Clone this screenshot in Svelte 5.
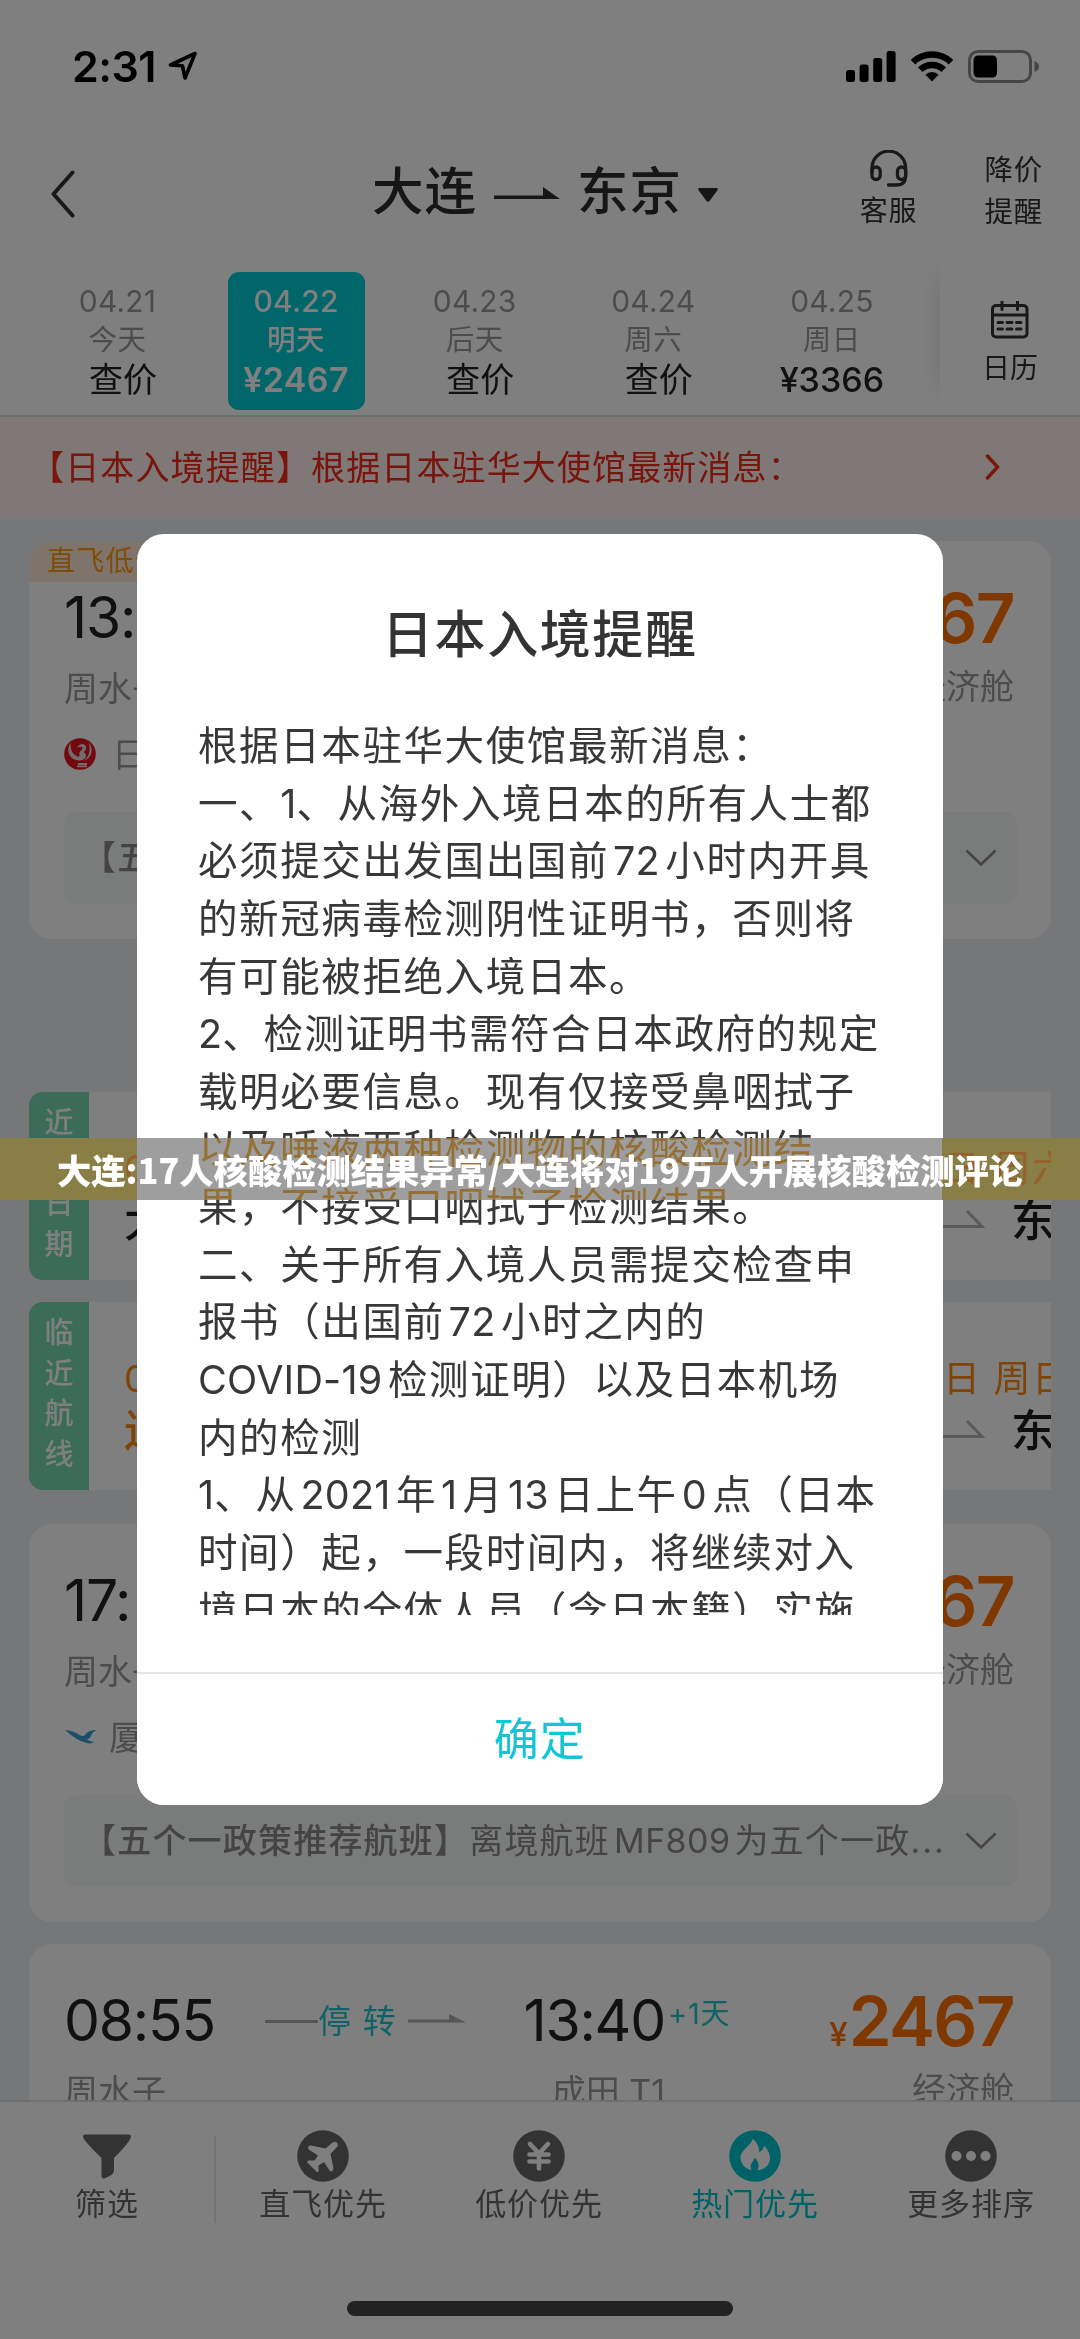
<script>
  const days = [
    { date: '04.21', name: '今天', price: '查价', query: true },
    { date: '04.22', name: '明天', price: '¥2467', active: true },
    { date: '04.23', name: '后天', price: '查价', query: true },
    { date: '04.24', name: '周六', price: '查价', query: true },
    { date: '04.25', name: '周日', price: '¥3366' }
  ];

  const noticeLines = [
    '根据日本驻华大使馆最新消息：',
    '一、1、从海外入境日本的所有人士都',
    '必须提交出发国出国前72小时内开具',
    '的新冠病毒检测阴性证明书，否则将',
    '有可能被拒绝入境日本。',
    '2、检测证明书需符合日本政府的规定',
    '载明必要信息。现有仅接受鼻咽拭子',
    '以及唾液两种检测物的核酸检测结',
    '果，不接受口咽拭子检测结果。',
    '二、关于所有入境人员需提交检查申',
    '报书（出国前72小时之内的',
    'COVID-19检测证明）以及日本机场',
    '内的检测',
    '1、从2021年1月13日上午0点（日本',
    '时间）起，一段时间内，将继续对入',
    '境日本的全体人员（含日本籍）实施'
  ];

  // Splits a line into Latin/digit runs and CJK runs; a run gets side space
  // only where it touches an ideograph.
  function runs(line) {
    const parts = line.split(/([A-Za-z0-9-]+)/).filter(Boolean);
    return parts.map((text, i) => {
      const latin = /^[A-Za-z0-9-]+$/.test(text);
      const prev = parts[i - 1];
      const next = parts[i + 1];
      return {
        text,
        latin,
        before: latin && !!prev && !'、（，'.includes(prev.at(-1)),
        after: latin && !!next && !'、）（，'.includes(next[0])
      };
    });
  }
</script>

{#snippet noteBox(full)}
  <div class="note">
    <span class="note-text">
      <b>【五个一政策推荐航班】</b>{#if full}离境航班<i>MF809</i>为五个一政<em>...</em>{/if}
    </span>
    <svg class="chev" viewBox="0 0 32 18"><path d="M1.5 1.5 16 15.5 30.5 1.5" /></svg>
  </div>
{/snippet}

{#snippet strip(label, first, city, accent, day)}
  <div class="strip">
    <div class="strip-label">
      {#each label as ch}<span>{ch}</span>{/each}
    </div>
    <div class="strip-body">
      <div class="strip-row orange"><span>{first}</span><span class="end">{day}</span></div>
      <div class="strip-row city">
        <span class:orange={accent}>{city}</span>
        <span class="end dest">
          <svg viewBox="0 0 46 20"><path d="M0 17.5H42L27 2" /></svg>东京
        </span>
      </div>
    </div>
  </div>
{/snippet}

<div class="screen">
  <div class="status">
    <span class="clock">2:31</span>
    <svg class="loc" viewBox="0 0 30 30"><path d="M27 2.5 2.5 14 14.5 14.8 17 27Z" /></svg>
    <svg class="signal" viewBox="0 0 50 33">
      <rect x="0" y="20" width="9" height="12" rx="2.5" />
      <rect x="13.6" y="14.5" width="9" height="17.5" rx="2.5" />
      <rect x="27.2" y="8" width="9" height="24" rx="2.5" />
      <rect x="40.6" y="1" width="9" height="31" rx="2.5" />
    </svg>
    <svg class="wifi" viewBox="0 0 44 32">
      <path class="arc" d="M3 12.2A27.5 27.5 0 0 1 41 12.2" />
      <path class="arc" d="M10.2 19.7A17 17 0 0 1 33.8 19.7" />
      <path d="M22 31.5 15.4 24.7A9.5 9.5 0 0 1 28.6 24.7Z" />
    </svg>
    <svg class="battery" viewBox="0 0 72 33">
      <rect class="shell" x="1.5" y="1.5" width="61" height="30" rx="8.5" />
      <rect x="5.5" y="5.5" width="23.5" height="22" rx="4.5" />
      <path class="cap" d="M66.5 11Q71 13 71 16.5T66.5 22Z" />
    </svg>
  </div>

  <header>
    <svg class="back" viewBox="0 0 26 48"><path d="M22.5 2.5 3.5 24 22.5 45.5" /></svg>
    <div class="route">
      <span>大连</span>
      <svg class="route-arrow" viewBox="0 0 66 14"><path d="M0 8.5H49V0L66 12H0Z" /></svg>
      <span>东京</span>
      <svg class="caret" viewBox="0 0 20 14"><path d="M1.5 0H18.5Q20.5 .3 19.4 2.2L11.5 13Q10 14.5 8.5 13L.6 2.2Q-.5 .3 1.5 0Z" /></svg>
    </div>
    <div class="service">
      <svg viewBox="0 0 38 38">
        <path d="M2 22V18A16.8 16.8 0 0 1 35.600 18V26Q35.600 35 26 35H18.500" />
        <rect x="2" y="17" width="8.200" height="12.500" rx="4.100" />
        <rect x="27.500" y="17" width="8.200" height="12.500" rx="4.100" />
      </svg>
      <span>客服</span>
    </div>
    <div class="alert"><span>降价</span><span>提醒</span></div>
  </header>

  <nav class="dates">
    {#each days as d}
      <div class="day" class:active={d.active}>
        <span class="d-date">{d.date}</span>
        <span class="d-name">{d.name}</span>
        <span class="d-price" class:query={d.query}>{d.price}</span>
      </div>
    {/each}
    <div class="fade"></div>
    <div class="calendar">
      <svg viewBox="0 0 38 38">
        <rect x="1.500" y="4.500" width="34.500" height="31.500" rx="3.500" />
        <path d="M1.500 14H36M11 0V8.500M26.500 0V8.500" />
        <path d="M7 21.500H11.500M16 21.500H21M25.500 21.500H30M7 28H11.500M16 28H21M25.500 28H30" />
      </svg>
      <span>日历</span>
    </div>
  </nav>

  <div class="banner">
    <span>【日本入境提醒】根据日本驻华大使馆最新消息：</span>
    <svg viewBox="0 0 16 26"><path d="M2.500 2 12.500 13 2.500 24" /></svg>
  </div>

  <main>
    <article class="card">
      <span class="tag">直飞低价</span>
      <div class="row times"><span class="dep">13:</span><span class="price"><small>¥</small>2467</span></div>
      <div class="row places"><span class="dep">周水子</span><span class="cabin">经济舱</span></div>
      <div class="row airline">
        <svg class="jal" viewBox="0 0 32 32">
          <circle cx="16" cy="16" r="15.800" fill="#e8101e" />
          <path fill="#ddd" d="M6.500 4.500Q3 10 5 16Q8 22.500 15.500 22.500Q22 22 22 17.500Q22 15 19.500 14Q23.500 11 21.500 7.500Q19.500 5 16 6.500L12.500 9.500 17 8.800Q20 9.500 17.500 12Q14.500 14.500 15.500 17Q15.500 20 12.500 18Q7.500 15.500 7 10Q6 7 6.500 4.500ZM25 4.500Q29 10 27 16Q25 21 20 23Q25 18 25.500 13Q26 8 25 4.500Z" />
          <path stroke="#ddd" stroke-width="1.800" d="M14 26H23M13 28.300H23" />
        </svg>
        <span>日航</span>
      </div>
      {@render noteBox(false)}
    </article>

    <div class="strips">
      {@render strip(['近', '', '日', '期'], '04', '大连', false, '日 周六')}
      {@render strip(['临', '近', '航', '线'], '04', '连', true, '日 周日')}
    </div>

    <article class="card">
      <div class="row times"><span class="dep">17:</span><span class="price"><small>¥</small>2467</span></div>
      <div class="row places"><span class="dep">周水子</span><span class="cabin">经济舱</span></div>
      <div class="row airline xiamen">
        <svg class="mf" viewBox="0 0 32 16">
          <path fill="#3a9ad0" d="M0 1Q8 1.500 14.500 6Q18 8 20 6Q23 1 31.500 1Q27 3 26 7Q25 10 22 10.500L23.500 11.500Q27 13 29.500 12.500Q26 15.500 22 14Q12 12 0 1Z" />
        </svg>
        <span>厦航</span>
      </div>
      {@render noteBox(true)}
    </article>

    <article class="card last">
      <div class="row times">
        <span class="dep">08:55</span>
        <span class="stop">
          <svg class="line" viewBox="0 0 53 3"><path d="M0 0H53V3H0Z" /></svg>
          <span>停 转</span>
          <svg class="head" viewBox="0 0 58 10"><path d="M0 5.500H41V0L58 8.500H0Z" /></svg>
        </span>
        <span class="arr">13:40</span>
        <span class="plus">+1天</span>
        <span class="price"><small>¥</small>2467</span>
      </div>
      <div class="row places">
        <span class="dep">周水子</span><span class="terminal">成田 T1</span><span class="cabin">经济舱</span>
      </div>
    </article>
  </main>

  <footer>
    <div class="tabs">
      <div class="tab filter">
        <svg viewBox="0 0 52 52"><path d="M4 4.500H48Q51 5 49.500 8Q48 13 33 28V40Q33 43 30.500 45L23.500 48.500Q20.500 49 20.500 46V28Q5 13 2.500 8Q1 5 4 4.500Z" /></svg>
        <span>筛选</span>
      </div>
      <div class="tab">
        <svg viewBox="0 0 52 52">
          <circle cx="26" cy="26" r="25.800" />
          <path class="cut" d="M40.500 13.500Q39 10.500 35.500 12.500L28.500 18.500 14 15.500Q11 15 11 18Q11.200 19.500 12.500 20L21 25.500 17.500 30.500 11.500 30.500Q9.500 31.500 11 33.200L20 42Q21.500 43 21.500 40.500V35.500L27 32 32.500 40.500Q34.500 42.500 36 40Q36.500 39 36.300 37.500L33.500 24 39.500 17.500Q41.500 15.500 40.500 13.500Z" />
        </svg>
        <span>直飞优先</span>
      </div>
      <div class="tab">
        <svg viewBox="0 0 52 52">
          <circle cx="26" cy="26" r="25.800" />
          <path class="yen" d="M17 14 26 23.500 35 14M26 23.500V38.500M16.500 24.500H35.500M16.500 31.500H35.500" />
        </svg>
        <span>低价优先</span>
      </div>
      <div class="tab on">
        <svg viewBox="0 0 52 52">
          <circle cx="26" cy="26" r="25.800" />
          <path class="cut" d="M24 8.500C26.500 12 30 14.500 30.200 22C33 21 35 18 35 15.500C38 18.500 41 23 41 28C41 36 34 40 28.500 40C30.500 36 30 32 25.500 27.500C24.800 32 19.500 34 22.500 40C16 39 11.500 34 11.500 27.500C11.500 20 22 16 24 8.500Z" />
        </svg>
        <span>热门优先</span>
      </div>
      <div class="tab">
        <svg viewBox="0 0 52 52">
          <circle cx="26" cy="26" r="25.800" />
          <circle class="cut" cx="11.500" cy="26" r="5" /><circle class="cut" cx="26" cy="26" r="5" /><circle class="cut" cx="40.500" cy="26" r="5" />
        </svg>
        <span>更多排序</span>
      </div>
    </div>
    <div class="home"></div>
  </footer>

  <div class="overlay"></div>

  <section class="modal">
    <h1>日本入境提醒</h1>
    <div class="content">
      {#each noticeLines as line}
        <p>{#each runs(line) as r}<span class:latin={r.latin} class:before={r.before} class:after={r.after}>{r.text}</span>{/each}</p>
      {/each}
    </div>
    <button>确定</button>
  </section>

  <div class="tint mul"></div>
  <div class="tint add"></div>
  <div class="band">
    <div class="side left">0</div>
    <div class="side right">日 周六</div>
  </div>
  <div class="caption">大连:17人核酸检测结果异常/大连将对19万人开展核酸检测评论</div>
</div>

<style>
  :global(body) { margin: 0; }
  .screen {
    position: relative;
    isolation: isolate;
    display: flex;
    flex-direction: column;
    width: 1080px;
    height: 2339px;
    overflow: hidden;
    background: #fff;
    color: #333;
    font-family: Inter, "Noto Sans CJK SC", sans-serif;
    white-space: nowrap;
  }
  svg { display: block; flex: none; fill: currentColor; }
  i, em { font-style: normal; }

  .status {
    display: flex;
    flex: none;
    align-items: flex-start;
    box-sizing: border-box;
    height: 84px;
    padding: 50px 40px 0 72px;
    color: #000;
  }
  .clock { width: 96px; font-size: 43px; line-height: 33px; font-weight: 600; letter-spacing: -0.5px; }
  .loc { width: 30px; height: 30px; margin-top: 1px; fill: none; stroke: #000; stroke-width: 3.6; stroke-linejoin: round; }
  .signal { width: 50px; height: 33px; margin-left: auto; }
  .wifi { width: 44px; height: 32px; margin-left: 14px; }
  .arc { fill: none; stroke: #000; stroke-width: 6.5; }
  .battery { width: 72px; height: 33px; margin-left: 14px; }
  .shell { fill: none; stroke: #8a8a8a; stroke-width: 3; }
  .cap { fill: #8a8a8a; }

  header {
    display: grid;
    flex: none;
    grid-template-columns: 374px 474px 82px 1fr;
    height: 121px;
    box-sizing: border-box;
    padding-right: 37px;
  }
  .back { width: 26px; height: 48px; margin: 86px 0 0 50px; fill: none; stroke: #333; stroke-width: 4; stroke-linecap: round; stroke-linejoin: round; }
  .route { display: flex; height: 72px; margin: 71px 0 0 -2px; font-size: 51.500px; line-height: 72px; font-weight: 500; letter-spacing: 1px; color: #2c2c2c; }
  .route-arrow { width: 66px; height: 14px; margin: 32px 17px 0 17px; }
  .caret { width: 20px; height: 14px; margin: 33px 0 0 16px; }
  .service { display: flex; flex-direction: column; align-items: center; width: 82px; margin-top: 66px; font-size: 28px; line-height: 40px; letter-spacing: 0.8px; }
  .service svg { width: 38px; height: 38px; fill: none; stroke: #333; stroke-width: 3.3; stroke-linecap: round; }
  .service span { margin: 3px 0 0 -1px; }
  .alert { display: flex; flex-direction: column; align-items: flex-end; margin-top: 65px; font-size: 28.500px; line-height: 41.500px; letter-spacing: 0.8px; }

  .dates { display: flex; flex: none; height: 212px; border-bottom: 2px solid #d9dede; padding: 67px 0 0 49px; box-sizing: border-box; }
  .day { display: flex; flex-direction: column; align-items: center; width: 137px; height: 138px; margin-right: 41.600px; border-radius: 11px; color: #999; box-sizing: border-box; padding-top: 9px; flex: none; }
  .d-date { font-size: 30px; line-height: 40px; letter-spacing: 0.2px; }
  .d-name { font-size: 28.500px; line-height: 37px; letter-spacing: 0.5px; }
  .d-price { font-size: 34px; line-height: 43px; color: #222; font-weight: 500; }
  .query { font-weight: 400; padding-left: 11px; }
  .active { background: #00ccd4; color: #fff; font-weight: 500; }
  .active .d-price { color: #fff; font-weight: 600; letter-spacing: 0.400px; }
  .fade { flex: none; width: 18px; height: 155px; margin: -16px 0 0 -20px; background: linear-gradient(to right, rgba(0, 0, 0, 0), rgba(0, 0, 0, 0.060)); mask-image: linear-gradient(transparent, #000 30%, #000 70%, transparent); }
  .calendar { display: flex; flex-direction: column; align-items: center; margin: 29px 0 0 42px; font-size: 28px; line-height: 40px; }
  .calendar svg { width: 38px; height: 38px; fill: none; stroke: #333; stroke-width: 3; stroke-linecap: round; }
  .calendar span { margin-top: 9px; }

  .banner { display: flex; flex: none; align-items: center; height: 102px; padding: 0 79px 0 30px; box-sizing: border-box; background: #fff0ef; color: #f02a18; font-size: 34px; letter-spacing: 1.130px; }
  .banner span { padding-bottom: 5px; }
  .banner svg { width: 16px; height: 26px; margin-left: auto; margin-bottom: 2px; fill: none; stroke: currentColor; stroke-width: 3.4; stroke-linecap: round; }

  main { flex: none; height: 1581px; box-sizing: border-box; padding: 22px 29px 0; overflow: hidden; background: #edeff3; display: flex; flex-direction: column; }
  .card { position: relative; flex: none; height: 398px; box-sizing: border-box; padding: 41px 37px 0 35px; border-radius: 23px; background: #fff; overflow: hidden; margin-bottom: 22px; }
  .tag { position: absolute; left: 0; top: 0; height: 41px; padding: 0 18px; background: #ffe9d6; color: #ff9a10; font-size: 28px; line-height: 40px; letter-spacing: 1.300px; }
  .row { display: flex; align-items: center; }
  .times { height: 71px; }
  .dep { width: 201px; flex: none; }
  .times .dep, .arr { font-size: 57px; letter-spacing: -1.200px; color: #222; }
  .price { display: flex; align-items: baseline; margin-left: auto; color: #ff7000; font-size: 69px; line-height: 71px; font-weight: 600; letter-spacing: -1.600px; margin-top: 15px; }
  .price small { font-size: 33px; font-weight: 500; letter-spacing: 0; margin-right: 1px; }
  .places { height: 68px; font-size: 34px; color: #999; padding-bottom: 2px; box-sizing: border-box; }
  .cabin { margin-left: auto; padding-bottom: 3px; }
  .airline { height: 66px; font-size: 34px; color: #999; gap: 16px; }
  .airline span { padding-bottom: 3px; }
  .jal { width: 32px; height: 32px; }
  .xiamen { gap: 11px; }
  .mf { width: 34px; height: 16px; }
  .note { display: flex; align-items: center; height: 92px; margin: 25px -3px 0 0; box-sizing: border-box; padding: 0 20px 0 18px; border-radius: 12px; background: #f4f8f6; color: #888; font-size: 34px; letter-spacing: 1.200px; }
  .note-text { padding-bottom: 5px; }
  .note b { font-weight: 500; }
  .note i { margin: 0 4px 0 4px; letter-spacing: 0.400px; }
  .note em { letter-spacing: 2px; }
  .chev { width: 32px; height: 18px; margin-left: auto; fill: none; stroke: #888; stroke-width: 2.600; }

  .strips { display: flex; flex-direction: column; gap: 22px; margin: 131px 0 34px; flex: none; }
  .strip { display: flex; height: 188px; }
  .strip-label { display: flex; flex-direction: column; width: 60px; box-sizing: border-box; padding-top: 11px; border-radius: 14px 0 0 14px; background: #74d8b0; color: #fff; font-size: 29px; line-height: 40.500px; font-weight: 500; text-align: center; flex: none; }
  .strip-label span { height: 40.500px; }
  .strip-body { flex: 1; box-sizing: border-box; padding: 51px 0 0 35px; overflow: hidden; background: #fff; }
  .strip-row { display: flex; justify-content: space-between; height: 52px; line-height: 52px; font-size: 37px; letter-spacing: 1.500px; }
  .orange { color: #ff8a10; }
  .strip-row .end { width: 108px; flex: none; }
  .city { color: #1c1c1c; font-size: 44px; font-weight: 500; }
  .strip-row .dest { display: flex; gap: 25px; width: 111px; }
  .dest svg { width: 46px; height: 20px; margin-top: 14px; fill: none; stroke: #b4b4b4; stroke-width: 3; }

  .stop { display: flex; align-items: center; flex: none; width: 201px; color: #22c4cc; font-size: 33px; letter-spacing: 1.200px; }
  .stop span { padding-bottom: 3px; }
  .stop svg { color: #aaa; }
  .stop .line { width: 53px; height: 3px; margin-top: 1px; }
  .stop .head { width: 58px; height: 10px; margin-left: 11px; margin-top: -3px; }
  .arr { width: 199px; text-align: right; margin-right: -1px; flex: none; }
  .plus { margin: -20px 0 0 4px; color: #22c4cc; font-size: 29px; letter-spacing: 0.800px; }
  .terminal { width: 400px; text-align: right; flex: none; }

  footer { display: flex; flex-direction: column; align-items: center; flex: 1; border-top: 2px solid #dcdfe3; background: #fff; }
  .tabs { display: flex; width: 1080px; padding-top: 28px; }
  .tab { display: flex; flex-direction: column; align-items: center; width: 216px; height: 98px; color: #666; font-size: 31px; line-height: 44px; letter-spacing: 0.9px; flex: none; }
  .tab svg { width: 52px; height: 52px; }
  .filter { width: 214px; border-right: 2px solid #e8e8e8; margin-right: -1px; margin-top: 6px; height: 87px; }
  .filter svg { margin-top: -6px; }
  .cut { fill: #fff; }
  .yen { fill: none; stroke: #fff; stroke-width: 4.600; stroke-linecap: round; }
  .on { color: #00c4cc; }
  .home { width: 386px; height: 15px; margin-top: 73px; border-radius: 8px; background: #444; }

  .overlay { position: absolute; inset: 0; background: rgba(0, 0, 0, 0.5); }

  .modal { position: absolute; left: 137px; top: 534px; width: 805.500px; height: 1271px; display: flex; flex-direction: column; border-radius: 27px; background: #fff; overflow: hidden; }
  h1 { margin: 65px 0 0; font-size: 51px; line-height: 72px; font-weight: 500; letter-spacing: 1.600px; text-align: center; color: #333; }
  .content { height: 897px; margin: 47px 0 0 61px; overflow: hidden; font-size: 39.500px; letter-spacing: 1.600px; color: #383838; }
  p { margin: 0; height: 57.650px; line-height: 57.650px; }
  .latin { letter-spacing: 0.200px; }
  .before { margin-left: 4px; }
  .after { margin-right: 5.500px; }
  button { height: 133px; margin-top: auto; padding: 0 0 6px; border: 0; border-top: 2px solid #e6e6e6; background: #fff; color: #12c6d6; font: inherit; font-size: 45px; letter-spacing: 1px; }

  .tint { position: absolute; left: 137px; top: 1138px; width: 805.500px; height: 62px; }
  .mul { background: rgb(13, 60, 135); mix-blend-mode: multiply; }
  .add { background: rgb(145, 98, 23); mix-blend-mode: plus-lighter; }
  .band { position: absolute; left: 0; top: 1138px; width: 1080px; height: 62px; display: flex; justify-content: space-between; }
  .side { box-sizing: border-box; height: 62px; overflow: hidden; background: #897e45; color: #94602c; font-size: 37px; line-height: 62px; letter-spacing: 1.500px; }
  .left { width: 137px; padding-left: 124px; }
  .right { width: 138px; padding-left: 1px; border-right: 29px solid #897e45; }
  .caption { position: absolute; left: 0; top: 1138px; width: 1080px; text-align: center; color: #fff; font-family: "Noto Sans CJK SC", sans-serif; font-size: 34.300px; line-height: 62px; font-weight: 900; }
</style>
